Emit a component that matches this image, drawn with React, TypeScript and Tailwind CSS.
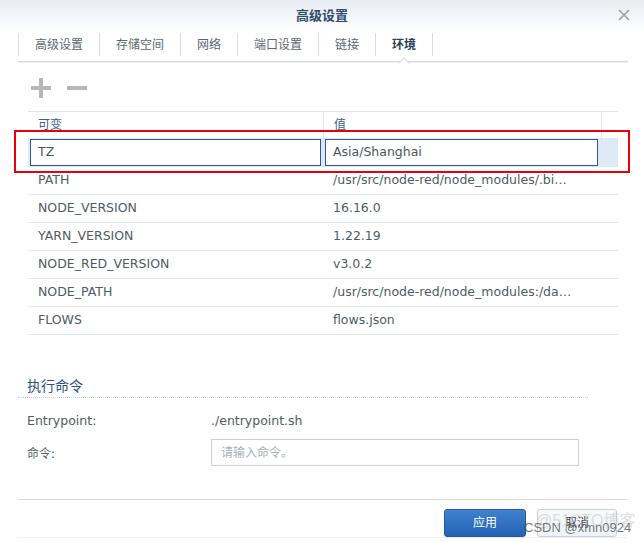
import React from 'react';

const TABS = ['高级设置', '存储空间', '网络', '端口设置', '链接', '环境'];

const ENV_ROWS: [string, string][] = [
  ['PATH', '/usr/src/node-red/node_modules/.bin:/usr/local/sbin:/usr/local/bin'],
  ['NODE_VERSION', '16.16.0'],
  ['YARN_VERSION', '1.22.19'],
  ['NODE_RED_VERSION', 'v3.0.2'],
  ['NODE_PATH', '/usr/src/node-red/node_modules:/data/node_modules'],
  ['FLOWS', 'flows.json'],
];

export default function App() {
  return (
    <div className="relative w-[644px] h-[542px] overflow-hidden bg-white font-['DejaVu_Sans','Noto_Sans_CJK_SC',sans-serif] text-[12px] text-[#505a64]">
      {/* Title bar */}
      <div className="relative h-[32px] flex items-center justify-center bg-gradient-to-b from-[#e7ecf2] to-white">
        <span className="text-[13px] font-bold text-[#2f4c70]">高级设置</span>
        <svg className="absolute left-[618px] top-[9px]" width="12" height="12" viewBox="0 0 12 12">
          <path d="M1 1 L11 11 M11 1 L1 11" stroke="#9c9c9c" strokeWidth="1.6" />
        </svg>
      </div>

      {/* Tabs */}
      <div className="relative mx-[18px] w-[610px] h-[30px] flex items-start pt-[1px] border-b border-[#d6dbe1] shadow-[0_1px_0_#eceef1]">
        {TABS.map((t, i) => (
          <div
            key={t}
            className={`relative h-[23px] flex items-center px-[16px] border-l border-[#d5dde6] ${
              i === TABS.length - 1 ? 'border-r font-bold text-[#2c3f55]' : 'text-[#5c6670]'
            }`}
          >
            {t}
            {i === TABS.length - 1 && (
              <span className="absolute left-1/2 -translate-x-1/2 top-[26px] w-[8px] h-[8px] rotate-45 bg-white border-l border-t border-[#d6dbe1]" />
            )}
          </div>
        ))}
      </div>

      <div className="ml-[28px] w-[590px]">
        {/* Toolbar */}
        <div className="mt-[16px] flex items-center gap-[16px] h-[20px] pl-[3px]">
          <svg width="20" height="20" viewBox="0 0 20 20">
            <path d="M10 0 V20 M0 10 H20" stroke="#b8b8b8" strokeWidth="4" />
          </svg>
          <svg width="20" height="20" viewBox="0 0 20 20">
            <path d="M0 10 H20" stroke="#b8b8b8" strokeWidth="4" />
          </svg>
        </div>

        {/* Table */}
        <div className="mt-[13px] text-[12.5px]">
          <div className="grid grid-cols-[295px_278px_17px] h-[27px] border-t border-[#dce3ea] text-[#3a5f8c] text-[12px]">
            <div className="flex items-center pl-[10px]">可变</div>
            <div className="flex items-center pl-[10px] border-l border-[#dfe5ec]">值</div>
            <div className="border-l border-[#dfe5ec]" />
          </div>
          <div className="grid grid-cols-[295px_278px_17px] h-[29px] items-center bg-[#dde9f7]">
            <div className="pl-[2px] pr-[2px]">
              <div className="h-[27px] flex items-center px-[7px] bg-white border border-[#2e5a8e] text-[#4a5460]">TZ</div>
            </div>
            <div className="pl-[2px] pr-[3px]">
              <div className="h-[27px] flex items-center px-[7px] bg-white border border-[#2e5a8e] text-[#4a5460]">Asia/Shanghai</div>
            </div>
            <div />
          </div>
          {ENV_ROWS.map(([k, v]) => (
            <div key={k} className="grid grid-cols-[295px_278px_17px] h-[28px] items-center border-b border-[#e4e9ee]">
              <div className="pl-[10px] truncate">{k}</div>
              <div className="pl-[10px] pr-[28px] truncate">{v}</div>
              <div />
            </div>
          ))}
        </div>
      </div>

      {/* Execute command */}
      <div className="ml-[18px] w-[570px] mt-[40px]">
        <div className="h-[23px] flex items-center pl-[9px] text-[14px] text-[#2d5283] border-b border-dotted border-[#c9d0d8]">执行命令</div>
        <div className="mt-[9px] h-[28px] flex items-center pl-[9px] text-[12.5px]">
          <div className="w-[184px]">Entrypoint:</div>
          <div>./entrypoint.sh</div>
        </div>
        <div className="mt-[4px] h-[27px] flex items-center pl-[9px]">
          <div className="w-[184px] pt-[3px]">命令:</div>
          <div className="w-[368px] h-[27px] flex items-center px-[9px] border border-[#c8d3de] text-[#aab0b7]">请输入命令。</div>
        </div>
      </div>

      {/* Footer */}
      <div className="ml-[18px] w-[609px] mt-[33px] border-t border-[#dadada] shadow-[0_1px_0_#efefef]">
        <div className="mt-[9px] flex justify-end gap-[11px] pr-[10px]">
          <button className="w-[82px] h-[28px] rounded-[3px] border border-[#2259a0] bg-gradient-to-b from-[#3f82d0] to-[#2463b2] text-white text-[12px]">
            应用
          </button>
          <button className="w-[80px] h-[28px] rounded-[3px] border border-[#c7d2de] bg-gradient-to-b from-[#f8fafc] to-[#eef2f6] text-[#3a4450] text-[12px]">
            取消
          </button>
        </div>
      </div>

      {/* Watermarks */}
      <span className="absolute left-[536px] top-[509px] text-[16px] text-[#c8c8c8]/60 font-['Liberation_Sans','Noto_Sans_CJK_SC',sans-serif]">@51CTO博客</span>
      <span className="absolute left-[524px] top-[518px] text-[13px] text-[#4a4a4a]/75 font-['Liberation_Sans',sans-serif]">CSDN @xmn0924</span>

      {/* Annotation */}
      <div className="absolute left-[14px] top-[130px] w-[616px] h-[43px] border-2 border-[#e8000b]" />
    </div>
  );
}
